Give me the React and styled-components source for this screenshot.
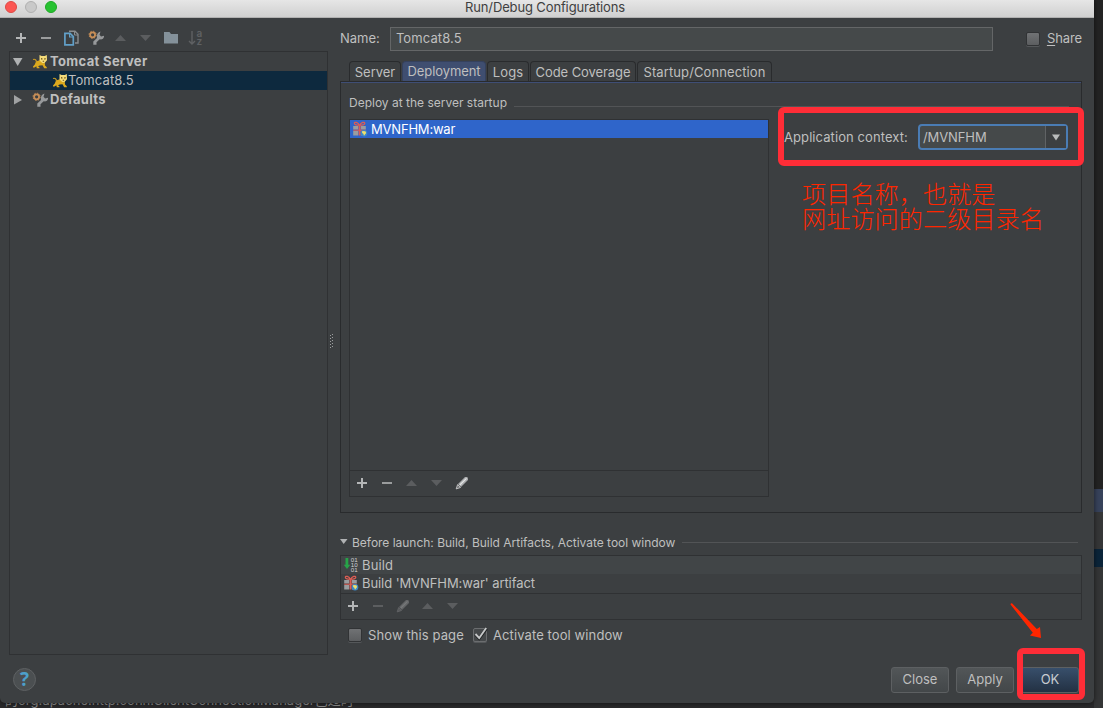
import styled, { createGlobalStyle, css } from "styled-components";

const GlobalStyle = createGlobalStyle`
    * {
        box-sizing: border-box;
    }
    body {
        margin: 0;
        background: #2b2b2b;
        font-family: Inter, Roboto, "Liberation Sans", sans-serif;
        font-size: 13px;
        color: #bfbfbf;
    }
`;

const PlusIcon = () => (
    <Svg viewBox="0 0 16 16">
        <path d="M7 3h2v4h4v2H9v4H7V9H3V7h4z" fill="#b4b6b7" />
    </Svg>
);

const MinusIcon = ({ dim }) => (
    <Svg viewBox="0 0 16 16">
        <path d="M3 7h10v2H3z" fill={dim ? "#5c5e60" : "#9a9c9d"} />
    </Svg>
);

const UpIcon = () => (
    <Svg viewBox="0 0 16 16">
        <path d="M2 11l5.500-6 5.500 6z" fill="#5b5d5f" />
    </Svg>
);

const DownIcon = () => (
    <Svg viewBox="0 0 16 16">
        <path d="M2 5h11l-5.500 6z" fill="#5b5d5f" />
    </Svg>
);

const CopyIcon = () => (
    <Svg viewBox="0 0 16 16">
        <path d="M6 1.2h6l3 3V13h-3" fill="none" stroke="#8b8f92" strokeWidth="1.4" />
        <path d="M11.5 1v4H15" fill="none" stroke="#8b8f92" />
        <path d="M1.9 3.3h5.2l3.2 3.2v8.4H1.9z" fill="#3c3f41" stroke="#62a0c8" strokeWidth="1.7" />
        <path d="M6.6 3.5V7h3.5" fill="none" stroke="#62a0c8" strokeWidth="1.2" />
    </Svg>
);

const SettingsIcon = () => (
    <Svg viewBox="0 0 16 16">
        <path d="M12.5 1.6l-1 3.2 1.600 1.700 2.900-.8c.2 2.700-1.800 4.100-4.300 3.600l-3.200 3v2.500H5.300v-3.200L9 8c-.6-3 .7-5.600 3.500-6.400z" fill="#97999b" />
        <circle cx="4.600" cy="4.800" r="2.500" fill="none" stroke="#c78e57" strokeWidth="1.800" />
        <circle cx="4.600" cy="4.800" r="3.600" fill="none" stroke="#c78e57" strokeWidth="1" strokeDasharray="1.410 1.410" />
    </Svg>
);

const FolderIcon = () => (
    <Svg viewBox="0 0 16 16">
        <path d="M1 2h5.5l1.5 2h7v9.5H1z" fill="#84919a" />
    </Svg>
);

const SortIcon = () => (
    <Svg viewBox="0 0 16 16">
        <path d="M4 1v13M1 11l3 3 3-3" fill="none" stroke="#5f6163" strokeWidth="1.4" />
        <text x="8.500" y="6.6" fontSize="10" fontWeight="600" fill="#5f6163">a</text>
        <text x="8.500" y="15" fontSize="10" fontWeight="600" fill="#5f6163">z</text>
    </Svg>
);

const TomcatIcon = () => (
    <Svg viewBox="0 0 16 16">
        <path d="M4 7.500L8.500 6l4.300 2.500.2 3 1.800 1.700v1h-2.600l-1.700-3-2.800.2L6 12.200l1.500 1.200v.8H4.800l-.5-2-1.800 1.400H1v-1l1.800-2z" fill="#dba91e" />
        <path d="M4.500 8.200C4.300 5.800 3.200 4.900 1 5.500" fill="none" stroke="#c99b22" strokeWidth="1.100" />
        <path d="M7.500 1l2 1h3.300l2-1 .2 5.200L12.500 9h-2.200L7.500 6.500z" fill="#f5dc7a" />
        <path d="M9 3.900l1.500.6v.9H9zM13.600 3.900l-1.500.6v.9h1.500zM10.700 6.800h1.400v1h-1.400z" fill="#6b5218" />
    </Svg>
);

const ArtifactIcon = () => (
    <Svg viewBox="0 0 16 16">
        <path d="M1.200 5h5v3.500h-5zM9 5h4.800v3.500H9zM1.200 10h5v4.500h-5zM9 10h4.800v4.500H9z" fill="#9a9da0" />
        <path d="M6.600 5h2v9.500h-2zM1.200 8.700h12.600v1.100H1.200z" fill="#dc5d54" />
        <path d="M7.500 4.500C6 1 2.500.6 2.300 2.200S5 4.200 7.500 4.500c1.600-3.500 5.100-3.900 5.300-2.300S10.100 4.200 7.500 4.500z" fill="none" stroke="#dc5d54" strokeWidth="1.200" />
        <circle cx="12" cy="12.300" r="3.300" fill="#3b87c8" />
        <path d="M10.200 10l3.200.2.8 1.900-2.200 2.700-.7-2-1.200-.9z" fill="#f1e06c" />
    </Svg>
);

const BuildIcon = () => (
    <Svg viewBox="0 0 16 16">
        <path d="M2.500 1h2.800v6.800h2L4 12 .8 7.800h1.700z" fill="#27a348" />
        {["01", "10", "01"].map((bits, i) => (
            <BitText key={i} x="7.800" y={5 + i * 5}>{bits}</BitText>
        ))}
    </Svg>
);

const PencilIcon = ({ dim }) => (
    <Svg viewBox="0 0 16 16">
        <path d="M11 2h2.200L14 3.200V5l-7 7-3-3z" fill={dim ? "#646668" : "#a9abad"} />
        <path d="M12.500 3.300L5.800 10" stroke={dim ? "#77797a" : "#e4e5e6"} strokeWidth="1.200" />
        <path d="M3.600 9.600l2.900 2.900-4.300 1.400z" fill={dim ? "#57595b" : "#6f7173"} stroke={dim ? "#646668" : "#d5d6d7"} strokeWidth=".8" />
    </Svg>
);

const CheckMark = () => (
    <Svg viewBox="0 0 16 16">
        <path d="M3.500 7.500l3.700 4L14.500 1.500" fill="none" stroke="#222425" strokeWidth="3" />
        <path d="M3.500 7l3.700 4L14.200 1" fill="none" stroke="#c6c8c9" strokeWidth="1.900" />
    </Svg>
);

const sidebarTools = [
    { id: 1, icon: <PlusIcon /> },
    { id: 2, icon: <MinusIcon /> },
    { id: 3, icon: <CopyIcon /> },
    { id: 4, icon: <SettingsIcon /> },
    { id: 5, icon: <UpIcon /> },
    { id: 6, icon: <DownIcon /> },
    { id: 7, icon: <FolderIcon /> },
    { id: 8, icon: <SortIcon /> },
];

const artifactTools = [
    { id: 1, icon: <PlusIcon /> },
    { id: 2, icon: <MinusIcon /> },
    { id: 3, icon: <UpIcon /> },
    { id: 4, icon: <DownIcon /> },
    { id: 5, icon: <PencilIcon /> },
];

const launchTools = [
    { id: 1, icon: <PlusIcon /> },
    { id: 2, icon: <MinusIcon dim /> },
    { id: 3, icon: <PencilIcon dim /> },
    { id: 4, icon: <UpIcon /> },
    { id: 5, icon: <DownIcon /> },
];

const tabs = [
    { label: "Server", width: 52 },
    { label: "Deployment", width: 84, track: -0.1, active: true },
    { label: "Logs", width: 42, track: 0.1 },
    { label: "Code Coverage", width: 106, track: -0.08 },
    { label: "Startup/Connection", width: 135, track: 0.1 },
];

const Tools = ({ items }) => items.map(({ id, icon }) => <Tool key={id}>{icon}</Tool>);

const Sidebar = () => (
    <SidebarColumn>
        <SidebarToolbar>
            <Tools items={sidebarTools} />
        </SidebarToolbar>
        <Tree>
            <TreeRow $bold>
                <Twisty viewBox="0 0 10 10"><path d="M0 1h9.500L4.700 9z" fill="#b0b2b3" /></Twisty>
                <TomcatIcon />
                <Text $track={0.35}>Tomcat Server</Text>
            </TreeRow>
            <TreeRow $selected $child>
                <TomcatIcon />
                <Text $track={0.1}>Tomcat8.5</Text>
            </TreeRow>
            <TreeRow $bold>
                <Twisty viewBox="0 0 10 10"><path d="M1 0v9.500L9 5z" fill="#a0a2a3" /></Twisty>
                <SettingsIcon />
                <Text $track={0.3}>Defaults</Text>
            </TreeRow>
        </Tree>
    </SidebarColumn>
);

const DeploymentPanel = () => (
    <Panel>
        <Group>
            <Text>Deploy at the server startup</Text>
            <Rule />
        </Group>
        <PanelBody>
            <ArtifactList>
                <ArtifactRow>
                    <ArtifactIcon />
                    <Text $track={-0.2}>MVNFHM:war</Text>
                </ArtifactRow>
                <ListSpace />
                <ListToolbar>
                    <Tools items={artifactTools} />
                </ListToolbar>
            </ArtifactList>
            <ContextForm>
                <ContextLabel>Application context:</ContextLabel>
                <Combo>
                    <ComboValue>/MVNFHM</ComboValue>
                    <ComboButton>
                        <Twisty viewBox="0 0 10 10"><path d="M1 2.500h8L5 8.500z" fill="#b9bbbc" /></Twisty>
                    </ComboButton>
                </Combo>
            </ContextForm>
        </PanelBody>
    </Panel>
);

const BeforeLaunch = () => (
    <>
        <LaunchHeader>
            <SmallTwisty viewBox="0 0 8 6"><path d="M0 0h7.500L3.700 5z" fill="#b0b2b3" /></SmallTwisty>
            <Text $track={-0.02}>Before launch: Build, Build Artifacts, Activate tool window</Text>
            <Rule />
        </LaunchHeader>
        <LaunchBox>
            <LaunchRow $light>
                <BuildIcon />
                <Text $track={0.15}>Build</Text>
            </LaunchRow>
            <LaunchRow>
                <ArtifactIcon />
                <Text $track={-0.08}>Build 'MVNFHM:war' artifact</Text>
            </LaunchRow>
            <LaunchToolbar>
                <Tools items={launchTools} />
            </LaunchToolbar>
        </LaunchBox>
        <Checks>
            <CheckBox />
            <CheckLabel $width={111}>Show this page</CheckLabel>
            <CheckBox><CheckMark /></CheckBox>
            <CheckLabel $width={140}>Activate tool window</CheckLabel>
        </Checks>
    </>
);

const App = () => {
    return (
        <Desktop>
            <GlobalStyle />
            <Dialog>
                <TitleBar>
                    <Light $fill="#fc5753" $edge="#de4a45" />
                    <Light $fill="#c9c9c9" $edge="#b0b0b0" />
                    <Light $fill="#28c231" $edge="#1fa826" />
                    <Title>Run/Debug Configurations</Title>
                </TitleBar>
                <Workspace>
                    <Sidebar />
                    <Splitter>
                        <svg width="6" height="16" viewBox="0 0 6 16">
                            {[0, 3, 6, 9, 12].map((y) => (
                                <path key={y} d={`M0 ${y + 1}h1v1H0zM2 ${y}h1v1H2z`} fill="#9c9e9f" />
                            ))}
                        </svg>
                    </Splitter>
                    <Main>
                        <NameRow>
                            <NameLabel>Name:</NameLabel>
                            <NameField>Tomcat8.5</NameField>
                            <CheckBox />
                            <ShareLabel><u>S</u>hare</ShareLabel>
                        </NameRow>
                        <TabBar>
                            {tabs.map(({ label, width, track, active }) => (
                                <Tab key={label} $width={width} $track={track} $active={active}>{label}</Tab>
                            ))}
                        </TabBar>
                        <DeploymentPanel />
                        <BeforeLaunch />
                    </Main>
                </Workspace>
                <Footer>
                    <Help>?</Help>
                    <Button>Close</Button>
                    <Button>Apply</Button>
                    <Button $primary>OK</Button>
                </Footer>
            </Dialog>
            <EditorEdge>
                <EdgeBlock $height={489} $color="#232323" />
                <EdgeBlock $height={23} $color="#37425a" />
                <EdgeBlock $height={37} $color="#353637" />
                <EdgeBlock $height={18} $color="#0b2439" />
                <EdgeBlock $height={141} $color="#343536" />
            </EditorEdge>
            <Console>的org.apache.http.conn.ClientConnectionManager已过时</Console>
            <ContextMark />
            <Note>项目名称，也就是<br />网址访问的二级目录名</Note>
            <Arrow viewBox="0 0 34 38">
                <path d="M1.500 2.500Q1.500 1 3 1.200L27.800 27l3.200-2 1 11-11-2.500 2.800-2.700z" fill="#ff2600" />
            </Arrow>
            <OkMark />
        </Desktop>
    );
};

const Svg = styled.svg`
    width: 16px;
    height: 16px;
    flex: none;
    display: block;
`;
const BitText = styled.text`
    font-family: "Liberation Sans", sans-serif;
    font-size: 6.2px;
    fill: #d0d2d3;
`;
const Twisty = styled.svg`
    width: 10px;
    height: 10px;
    flex: none;
`;
const SmallTwisty = styled.svg`
    width: 8px;
    height: 6px;
    margin-right: 4px;
    flex: none;
`;
const Text = styled.span`
    white-space: nowrap;
    letter-spacing: ${({ $track }) => $track || 0}px;
`;
const Desktop = styled.div`
    position: relative;
    width: 1103px;
    height: 708px;
    overflow: hidden;
    display: grid;
    grid-template-columns: 1094px 9px;
    grid-template-rows: 703px 5px;
    background: #2b2b2b;
`;
const Dialog = styled.div`
    display: flex;
    flex-direction: column;
    background: #3c3f41;
    border-radius: 0 0 5px 5px;
    box-shadow: 0 0 5px rgba(0, 0, 0, 0.6);
    z-index: 1;
`;
const TitleBar = styled.div`
    display: flex;
    align-items: center;
    gap: 8px;
    height: 18px;
    padding: 0 0 4px 5px;
    background: linear-gradient(#e6e6e6, #d0d0d0);
    border-bottom: 1px solid #b1b1b1;
`;
const Light = styled.i`
    width: 12px;
    height: 12px;
    border-radius: 50%;
    background: ${({ $fill }) => $fill};
    border: 1px solid ${({ $edge }) => $edge};
`;
const Title = styled.div`
    margin: 1px 0 0 400px;
    color: #404040;
    white-space: nowrap;
    letter-spacing: -0.13px;
`;
const Workspace = styled.div`
    display: flex;
    height: 637px;
    padding-left: 9px;
`;
const SidebarColumn = styled.div`
    display: flex;
    flex-direction: column;
    width: 319px;
`;
const SidebarToolbar = styled.div`
    display: flex;
    height: 33px;
    padding-top: 8px;
`;
const Tool = styled.span`
    display: flex;
    align-items: center;
    width: 25px;
    height: 24px;
    padding-left: 4px;
`;
const Tree = styled.div`
    flex: 1;
    border: 1px solid #2f3133;
`;
const TreeRow = styled.div`
    display: flex;
    align-items: center;
    height: 19px;
    padding-left: ${({ $child }) => ($child ? "42px" : "3px")};
    background: ${({ $selected }) => ($selected ? "#0d293e" : "transparent")};
    font-weight: ${({ $bold }) => ($bold ? 700 : 400)};

    ${Twisty} {
        margin-right: 9px;
    }
    ${Text} {
        margin: -2px 0 0 ${({ $child }) => ($child ? 0 : 2)}px;
    }
`;
const Splitter = styled.div`
    display: flex;
    align-items: center;
    width: 12px;
    padding: 10px 0 0 2px;
`;
const Main = styled.div`
    width: 742px;
`;
const NameRow = styled.div`
    display: flex;
    align-items: center;
    height: 24px;
    margin: 9px 0 10px;
`;
const NameLabel = styled.label`
    width: 50px;
    margin-top: -2px;
`;
const NameField = styled.div`
    width: 603px;
    height: 24px;
    flex: none;
    margin-right: 33px;
    padding-left: 5px;
    line-height: 20px;
    letter-spacing: 0.1px;
    background: #45494a;
    border: 1px solid #646667;
`;
const ShareLabel = styled.label`
    margin: -2px 0 0 7px;
    letter-spacing: -0.1px;

    u {
        text-underline-offset: 2px;
    }
`;
const CheckBox = styled.span`
    flex: none;
    width: 14px;
    height: 14px;
    border-radius: 2px;
    border: 1px solid #313335;
    background: linear-gradient(#707274, #5c5e60);
    box-shadow: 0 1px 0 #55585a;

    ${Svg} {
        margin: -2px 0 0 -2px;
        overflow: visible;
    }
    &:has(svg) {
        background: #45484a;
        border-color: #6b6d6f;
    }
`;
const TabBar = styled.div`
    display: flex;
    height: 20px;
    padding-left: 9px;
    gap: 1px;
`;
const Tab = styled.div`
    width: ${({ $width }) => $width}px;
    height: 20px;
    border: 1px solid #292b2d;
    border-bottom: 0;
    border-radius: 4px 4px 0 0;
    line-height: 20px;
    letter-spacing: ${({ $track }) => $track || 0}px;
    text-align: center;
    white-space: nowrap;
    ${({ $active }) => $active && css`
        background: #3f4e70;
        border-color: #35415d;
        line-height: 18px;
    `}
`;
const Panel = styled.div`
    height: 432px;
    padding: 13px 0 0 8px;
    border: 1px solid #292b2d;
    box-shadow: inset 0 1px 0 #3f4e75;
`;
const Group = styled.div`
    display: flex;
    align-items: center;
    gap: 7px;
    height: 16px;
    font-size: 12px;

    ${Text} {
        margin-top: -2px;
    }
`;
const Rule = styled.i`
    flex: 1;
    height: 1px;
    margin: 6px 12px 0 0;
    background: #525456;
`;
const PanelBody = styled.div`
    display: flex;
    margin-top: 8px;
`;
const ArtifactList = styled.div`
    display: flex;
    flex-direction: column;
    width: 420px;
    height: 378px;
    border: 1px solid #2f3133;
`;
const ArtifactRow = styled.div`
    display: flex;
    align-items: center;
    gap: 3px;
    height: 18px;
    padding-left: 2px;
    background: #2f65ca;
    color: #fff;
`;
const ListSpace = styled.div`
    flex: 1;
`;
const ListToolbar = styled.div`
    display: flex;
    height: 26px;
    border-top: 1px solid #2f3133;
`;
const ContextForm = styled.div`
    display: flex;
    align-items: center;
    height: 26px;
    margin: 5px 0 0 15px;
`;
const ContextLabel = styled.label`
    width: 134px;
    white-space: nowrap;
    letter-spacing: 0.08px;
`;
const Combo = styled.div`
    display: flex;
    width: 150px;
    height: 26px;
    border: 2px solid #4a7cb4;
    border-radius: 4px;
    background: #45494a;
`;
const ComboValue = styled.div`
    flex: 1;
    padding-left: 3px;
    line-height: 22px;
    letter-spacing: -0.1px;
`;
const ComboButton = styled.div`
    display: flex;
    justify-content: center;
    align-items: center;
    width: 21px;
    background: #3c3f41;
    border-left: 1px solid #606365;
`;
const LaunchHeader = styled.div`
    display: flex;
    align-items: center;
    height: 16px;
    margin: 21px 0 5px;
    font-size: 12px;

    ${Rule} {
        margin: 0 4px 0 7px;
    }
`;
const LaunchBox = styled.div`
    height: 65px;
    border: 1px solid #2f3133;
`;
const LaunchRow = styled.div`
    display: flex;
    align-items: center;
    gap: 3px;
    height: ${({ $light }) => ($light ? 18 : 19)}px;
    padding: 0 0 ${({ $light }) => ($light ? 0 : 1)}px 2px;
    background: ${({ $light }) => ($light ? "#414547" : "#3c3f41")};
`;
const LaunchToolbar = styled.div`
    display: flex;
    height: 26px;
    border-top: 1px solid #2f3133;
`;
const Checks = styled.div`
    display: flex;
    align-items: center;
    height: 30px;
    padding-left: 8px;
`;
const CheckLabel = styled.label`
    width: ${({ $width }) => $width}px;
    margin-top: -1px;
    padding-left: 6px;
    white-space: nowrap;
    letter-spacing: 0.1px;
`;
const Footer = styled.div`
    display: flex;
    align-items: center;
    gap: 7px;
    height: 48px;
    padding: 2px 15px 0 13px;
`;
const Help = styled.div`
    width: 23px;
    height: 23px;
    margin: -2px auto 0 0;
    border: 1px solid #5e6163;
    border-radius: 50%;
    background: #4b4f51;
    color: #4d9fca;
    font-family: "Open Sans", sans-serif;
    font-size: 19px;
    font-weight: 700;
    line-height: 21px;
    text-align: center;
`;
const Button = styled.button`
    width: 58px;
    height: 26px;
    padding: 0 0 2px;
    border: 1px solid #5d6062;
    border-radius: 3px;
    background: linear-gradient(#525658, #434749);
    color: #bfbfbf;
    font: inherit;
    ${({ $primary }) => $primary && css`
        background: linear-gradient(#384f6b, #233143);
        color: #c7cbd0;
    `}
`;
const EditorEdge = styled.div`
    grid-column: 2;
    grid-row: 1 / 3;
`;
const EdgeBlock = styled.div`
    height: ${({ $height }) => $height}px;
    background: ${({ $color }) => $color};
`;
const Console = styled.div`
    display: flex;
    align-items: flex-end;
    grid-column: 1;
    grid-row: 2;
    height: 5px;
    padding-left: 5px;
    overflow: hidden;
    background: #29292b;
    color: #8c8c8c;
    font-family: Inter, "Noto Sans CJK SC", sans-serif;
    font-size: 13px;
    line-height: 16px;
    letter-spacing: 0.04px;
    white-space: nowrap;
`;
const Mark = styled.div`
    position: absolute;
    z-index: 2;
    border: 6px solid #ff2d37;
    border-radius: 6px;
`;
const ContextMark = styled(Mark)`
    left: 778px;
    top: 107px;
    width: 306px;
    height: 59px;
`;
const OkMark = styled(Mark)`
    left: 1017px;
    top: 648px;
    width: 68px;
    height: 52px;
`;
const Note = styled.div`
    position: absolute;
    z-index: 2;
    left: 802px;
    top: 181px;
    color: #ff2600;
    font-family: "Noto Sans CJK SC", sans-serif;
    font-size: 24.2px;
    font-weight: 300;
    line-height: 24.5px;
    white-space: nowrap;
`;
const Arrow = styled.svg`
    position: absolute;
    z-index: 2;
    left: 1009px;
    top: 602px;
    width: 34px;
    height: 38px;
`;

export default App;
